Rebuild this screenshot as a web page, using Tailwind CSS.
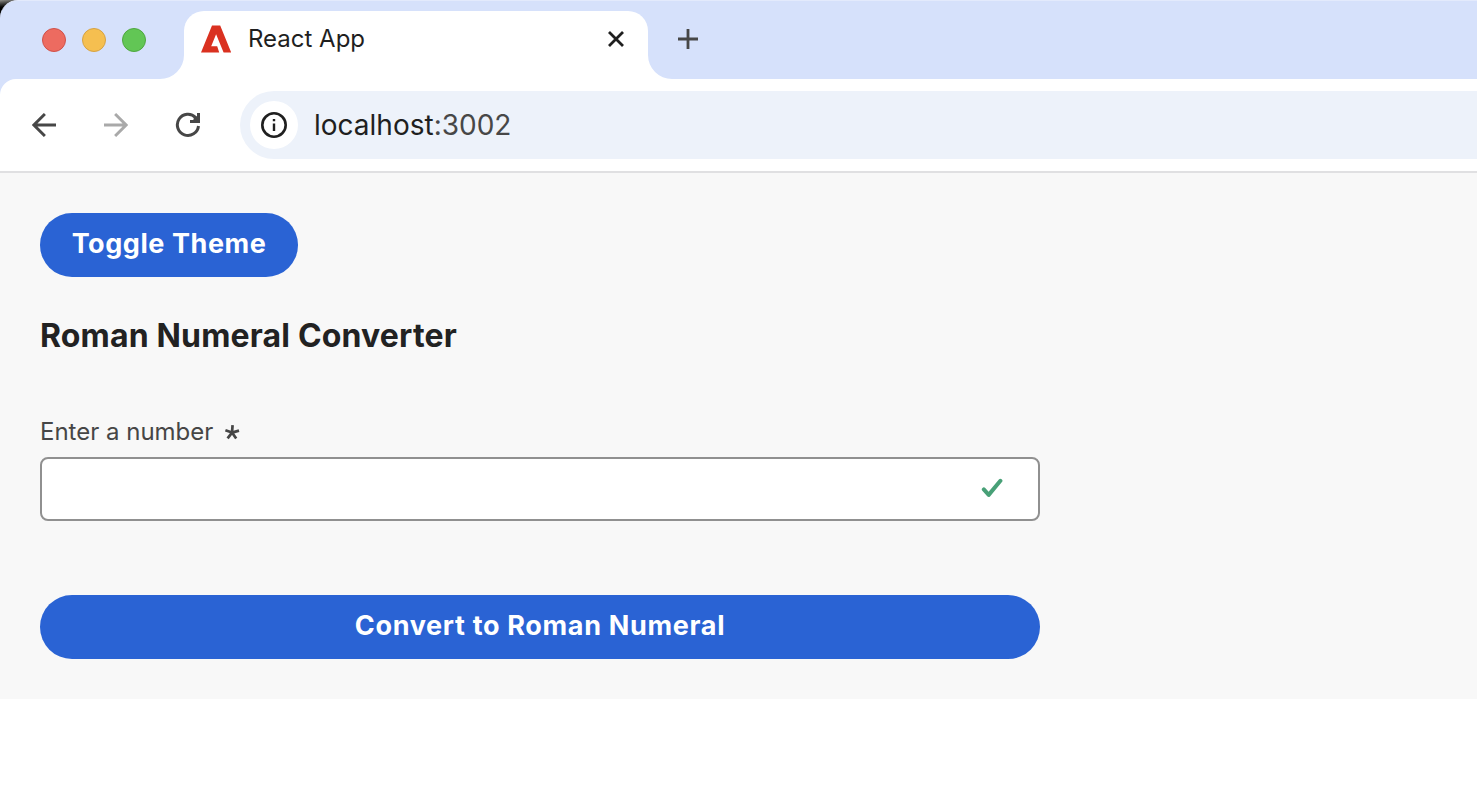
<!DOCTYPE html>
<html lang="en">
<head>
<meta charset="utf-8">
<title>React App</title>
<script src="https://cdn.jsdelivr.net/npm/@tailwindcss/browser@4"></script>
</head>
<body class="bg-white font-['Inter',sans-serif] w-[1477px] h-[804px] overflow-hidden">
<div class="bg-linear-to-br from-[#8f8f8a] from-0% to-black to-[9px]">
<header class="bg-[#d6e1fb] rounded-tl-[18px] border-t border-[#e3eafc]">
  <div class="flex h-[78px]">
    <div class="flex w-[160px] gap-4 pt-[27px] pl-[42px]">
      <span class="size-6 rounded-full bg-[#ed6b60] border border-[#d05149]"></span>
      <span class="size-6 rounded-full bg-[#f5bf50] border border-[#d6a243]"></span>
      <span class="size-6 rounded-full bg-[#62c655] border border-[#4fa73f]"></span>
    </div>
    <svg class="self-end" width="24" height="24" viewBox="0 0 24 24"><path d="M24 0V24H0A24 24 0 0 0 24 0Z" fill="#fff"/></svg>
    <div class="mt-[10px] flex w-[464px] rounded-t-[20px] bg-white">
      <svg class="mt-[14px] ml-[17px]" width="30" height="28" viewBox="0 0 30 28"><path fill="#da3120" d="M11 .4H19.2L30.2 27.5H22.6L15.1 9.2L10.2 21.3H16.2L18.2 27.5H0Z"/></svg>
      <span class="ml-[17px] mt-[12px] text-[24px] leading-8 whitespace-nowrap text-[#1f1f1f]">React App</span>
      <svg class="ml-auto mr-[24px] mt-[20px]" width="16" height="16" viewBox="0 0 16 16" fill="none" stroke="#1f1f1f" stroke-width="2.8"><path d="M1 1L15 15M15 1L1 15"/></svg>
    </div>
    <svg class="self-end" width="24" height="24" viewBox="0 0 24 24"><path d="M0 0V24H24A24 24 0 0 1 0 0Z" fill="#fff"/></svg>
    <svg class="ml-[6px] mt-[28px]" width="20" height="20" viewBox="0 0 20 20" fill="none" stroke="#474747" stroke-width="2.8"><path d="M10 0V20M0 10H20"/></svg>
  </div>
  <div class="flex h-[94px] items-start rounded-tl-[16px] border-b-2 border-[#e0e0e2] bg-white pt-3">
    <svg class="ml-[32px] mt-[22px]" width="24" height="24" viewBox="0 0 24 24" fill="none" stroke="#474747" stroke-width="2.9"><path d="M24 12H2M12.9 1L1.9 12L12.9 23"/></svg>
    <svg class="ml-[48px] mt-[22px]" width="24" height="24" viewBox="0 0 24 24" fill="none" stroke="#a9a9a9" stroke-width="2.9"><path d="M0 12H22M11.1 1L22.1 12L11.1 23"/></svg>
    <svg class="ml-[47px] mt-[21px]" width="26" height="26" viewBox="0 0 26 26" fill="none" stroke="#474747" stroke-width="3"><path d="M23.5 14A10.6 10.6 0 1 1 20.7 5.6L23 9M23.5 1V9.5H15"/><path d="M19 5.5L23 4V9H18Z" fill="#474747" stroke="none"/></svg>
    <div class="ml-[39px] flex h-[68px] flex-1 items-center rounded-l-full bg-[#edf2fa] pl-[10px]">
      <span class="flex size-12 items-center justify-center rounded-full bg-white">
        <svg width="26" height="26" viewBox="0 0 26 26" fill="none" stroke="#1f1f1f" stroke-width="2.6"><circle cx="13" cy="13" r="11.7"/><path d="M13 11.4V19M13 7V9.3" stroke-width="2.4"/></svg>
      </span>
      <span class="ml-4 text-[28px] whitespace-nowrap text-[#1f1f1f]">localhost<span class="text-[#474747]">:3002</span></span>
    </div>
  </div>
</header>
</div>
<main class="h-[526px] bg-[#f8f8f8] px-10 pt-10">
  <button class="flex h-16 w-[258px] justify-center rounded-full bg-[#2a63d4] pt-[11px] text-[27px] leading-10 font-bold tracking-[0.56px] whitespace-nowrap text-white">Toggle Theme</button>
  <h1 class="mt-[39px] text-[32px] leading-10 font-bold tracking-[0.17px] whitespace-nowrap text-[#222222]">Roman Numeral Converter</h1>
  <form class="w-[1000px]">
    <label class="mt-[60px] flex h-8 items-center text-[24px] leading-8 whitespace-nowrap text-[#464646]"><span>Enter a number</span>
      <svg class="ml-3" width="15" height="15" viewBox="0 0 15 15" fill="none" stroke="#464646" stroke-width="2.7"><path d="M7 7.6L7.6 .2M7 7.6L.4 5.2M7 7.6L14 5.6M7 7.6L2.6 13.4M7 7.6L11.2 13.6"/></svg>
    </label>
    <div class="mt-[9px] flex h-16 items-center justify-end rounded-lg border-2 border-[#909090] bg-white pr-[35px]">
      <svg class="-mt-[2px]" width="22" height="20" viewBox="0 0 22 20" fill="none" stroke="#48a077" stroke-width="4" stroke-linecap="round" stroke-linejoin="round"><path d="M2.8 11.4L7.7 16.9L19.4 2.8"/></svg>
    </div>
    <button type="button" class="mt-[74px] flex h-16 w-full justify-center rounded-full bg-[#2a63d4] pt-[11px] text-[27px] leading-10 font-bold tracking-[0.67px] whitespace-nowrap text-white">Convert to Roman Numeral</button>
  </form>
</main>
</body>
</html>
